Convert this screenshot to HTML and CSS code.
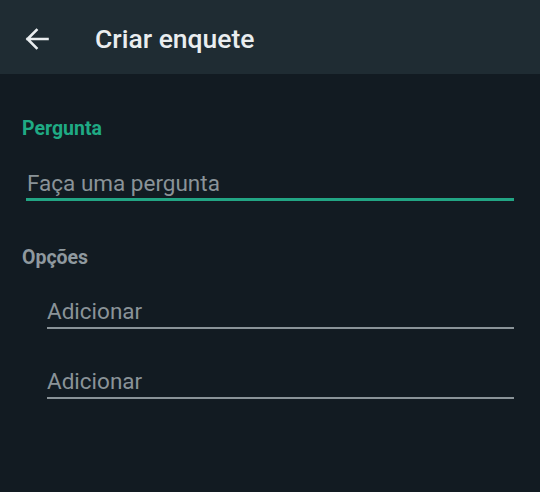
FILE: index.html
```html
<!DOCTYPE html>
<html lang="pt">
<head>
<meta charset="utf-8">
<link rel="stylesheet" href="styles.css">
</head>
<body>
<div class="app">
  <header class="topbar">
    <svg class="back" width="24" height="22" viewBox="0 0 24 22" aria-hidden="true">
      <path d="M22.5 11H2.5M11.5 2L2.5 11l9 9" fill="none" stroke="#e9edef" stroke-width="2.6" stroke-linecap="square" stroke-linejoin="miter"/>
    </svg>
    <h1 class="title">Criar enquete</h1>
  </header>
  <main class="content">
    <div class="label label-active">Pergunta</div>
    <div class="field field-question">Faça uma pergunta</div>
    <div class="label label-options">Opções</div>
    <div class="options">
      <div class="field field-option">Adicionar</div>
      <div class="field field-option">Adicionar</div>
    </div>
  </main>
</div>
</body>
</html>
```

FILE: styles.css
```css
* { box-sizing: border-box; }
html, body { margin: 0; padding: 0; }
body {
  width: 540px;
  height: 492px;
  background: #121b22;
  font-family: Roboto, "Noto Sans", sans-serif;
  overflow: hidden;
}
.app { display: flex; flex-direction: column; height: 100%; }
.topbar {
  height: 74px;
  flex: none;
  background: #1f2c33;
  display: flex;
  align-items: flex-start;
  padding: 23px 0 0 25px;
}
.back { display: block; margin-top: 5px; flex: none; }
.title {
  margin: 0 0 0 46px;
  font-size: 26.5px;
  line-height: 32px;
  font-weight: 500;
  color: #e9edef;
}
.content {
  padding: 43px 26px 0 22px;
}
.label {
  font-size: 19.5px;
  font-weight: 700;
  line-height: 24px;
}
.label-active { color: #1faa84; }
.label-options { color: #8f999f; margin-top: 45px; }
.field {
  font-size: 22.5px;
  color: #8a9398;
  line-height: 28px;
}
.field-question {
  margin-top: 28px;
  margin-left: 4px;
  padding-left: 1px;
  padding-bottom: 1px;
  border-bottom: 3px solid #22a584;
}
.options {
  padding-left: 25px;
  display: flex;
  flex-direction: column;
  gap: 38px;
  margin-top: 27px;
}
.field-option {
  padding-bottom: 2px;
  border-bottom: 2px solid #8a9398;
}
```
